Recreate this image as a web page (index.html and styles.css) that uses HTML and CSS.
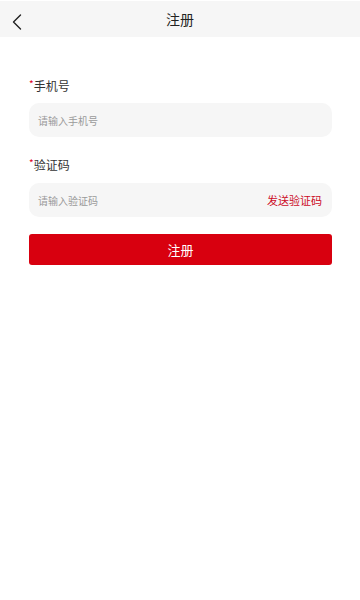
FILE: index.html
```html
<!DOCTYPE html>
<html lang="zh">
<head>
<meta charset="utf-8">
<title>注册</title>
<link rel="stylesheet" href="styles.css">
</head>
<body>
<header class="topbar">
  <span class="back">
    <svg width="10" height="16" viewBox="0 0 10 16"><path d="M8.5 1 L1.5 8 L8.5 15" fill="none" stroke="#222" stroke-width="1.4" stroke-linecap="round" stroke-linejoin="round"/></svg>
  </span>
  <h1 class="title">注册</h1>
</header>
<main class="form">
  <div class="label"><span class="req">*</span>手机号</div>
  <div class="field"><span class="ph">请输入手机号</span></div>
  <div class="label label2"><span class="req">*</span>验证码</div>
  <div class="field"><span class="ph">请输入验证码</span><span class="send">发送验证码</span></div>
  <button class="submit">注册</button>
</main>
</body>
</html>
```
FILE: styles.css
```css
* { box-sizing: border-box; }
html, body { margin: 0; padding: 0; background: #fff; }
body {
  font-family: "Noto Sans CJK SC", "Noto Sans", sans-serif;
  color: #333;
  padding-top: 1px;
}
.topbar {
  position: relative;
  height: 36px;
  background: #f6f6f6;
  display: flex;
  align-items: center;
  justify-content: center;
}
.back {
  position: absolute;
  left: 12px;
  top: 13px;
  display: flex;
}
.title {
  margin: 0;
  font-size: 14px;
  font-weight: 400;
  color: #222;
  line-height: 20px;
}
.form {
  padding: 0 28px 0 29px;
  display: flex;
  flex-direction: column;
}
.label {
  margin-top: 41px;
  font-size: 12px;
  line-height: 16px;
  color: #333;
}
.label2 { margin-top: 20px; }
.req { color: #e0001b; font-size: 10px; vertical-align: top; line-height: 12px; }
.field {
  margin-top: 9px;
  height: 34px;
  background: #f6f6f6;
  border-radius: 10px;
  display: flex;
  align-items: center;
  justify-content: space-between;
  padding: 0 10px 0 9px;
}
.label2 + .field { margin-top: 10px; }
.ph { font-size: 10px; color: #9a9a9a; }
.send { font-size: 11px; color: #cc0a1f; }
.submit {
  margin-top: 17px;
  height: 31px;
  border: none;
  border-radius: 3px;
  background: #d8000f;
  color: #fff;
  font-family: inherit;
  font-size: 13px;
  padding: 0;
}
```
